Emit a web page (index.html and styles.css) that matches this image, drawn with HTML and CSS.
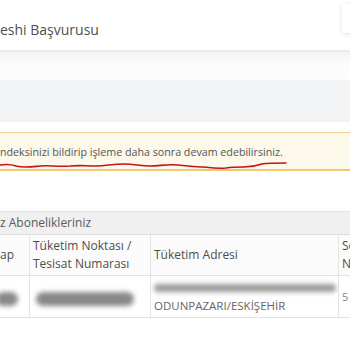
FILE: index.html
```html
<!DOCTYPE html>
<html lang="tr">

<head>
    <meta charset="UTF-8">
    <title>Başvuru</title>
    <link rel="stylesheet" href="styles.css">
</head>

<body>
    <header class="topbar">
        <h1 class="page-title">eshi Başvurusu</h1>
        <div class="user-card"></div>
    </header>
    <div class="subbar"></div>
    <div class="gray-band"></div>

    <main class="content">
        <div class="alert">
            <span class="alert-text">ndeksinizi bildirip işleme daha sonra devam edebilirsiniz.</span>
            <svg class="scribble" width="300" height="12" viewBox="0 0 300 12">
                <path d="M0 6 C6 5 10 5 16 7 C24 9 30 8 40 7 C50 6 56 8 70 7 C80 6 86 7 96 7 C106 7 112 5 124 5 C134 5 140 7 150 7 C160 7 166 5 178 6 C190 7 196 8 204 8 C212 9 218 10 226 9 C232 8 236 8 244 8 C252 8 256 7 262 5 C268 4 276 4 286 4"
                    fill="none" stroke="#c4121f" stroke-width="1.6" stroke-linecap="round" />
            </svg>
        </div>

        <section class="panel">
            <div class="panel-heading">z Abonelikleriniz</div>
            <table class="subs-table">
                <thead>
                    <tr>
                        <th class="col-a">ap</th>
                        <th class="col-b">Tüketim Noktası / Tesisat Numarası</th>
                        <th class="col-c">Tüketim Adresi</th>
                        <th class="col-d">Sözleşme Numarası</th>
                    </tr>
                </thead>
                <tbody>
                    <tr>
                        <td class="col-a"><span class="blur blur-a"></span></td>
                        <td class="col-b"><span class="blur blur-b"></span></td>
                        <td class="col-c">
                            <span class="blur blur-c"></span>
                            <div class="address">ODUNPAZARI/ESKİŞEHİR</div>
                        </td>
                        <td class="col-d"><span class="faint">5</span></td>
                    </tr>
                </tbody>
            </table>
        </section>
    </main>
</body>

</html>
```

FILE: styles.css
```css
body {
    margin: 0;
    padding: 0;
    font-family: "Open Sans", "Liberation Sans", sans-serif;
    background: #ffffff;
    color: #555555;
    width: 350px;
    height: 350px;
    overflow: hidden;
}

.topbar {
    height: 52px;
    background: #ffffff;
    display: flex;
    align-items: center;
    justify-content: space-between;
    border-bottom: 2px solid #ececec;
    box-sizing: border-box;
}

.page-title {
    margin: 0;
    font-size: 14px;
    font-weight: 400;
    color: #505050;
    padding-top: 8px;
}

.user-card {
    width: 14px;
    height: 29px;
    margin-top: -14px;
    background: #ffffff;
    box-shadow: 0 1px 5px rgba(0, 0, 0, 0.12);
    border-radius: 2px;
    margin-right: -6px;
}

.subbar {
    height: 28px;
    background: linear-gradient(#f3f3f3, #fcfcfc 40%, #fdfdfd);
}

.gray-band {
    height: 42px;
    background: #f3f4f6;
}

.content {
    padding-top: 10px;
}

.alert {
    position: relative;
    background: #fcf8ea;
    border-top: 1px solid #f2d48f;
    border-bottom: 2px solid #f0c870;
    height: 36px;
    display: flex;
    align-items: center;
}

.alert-text {
    font-size: 10.7px;
    color: #555555;
    margin-top: 2px;
}

.scribble {
    position: absolute;
    left: 0;
    top: 26px;
}

.panel {
    margin-top: 40px;
}

.panel-heading {
    height: 22px;
    line-height: 22px;
    background: #f0f0f0;
    border-top: 1px solid #e3e3e3;
    border-bottom: 1px solid #dddddd;
    font-size: 12px;
    color: #5a5a5a;
}

.subs-table {
    border-collapse: collapse;
    table-layout: fixed;
    width: 420px;
}

.subs-table th,
.subs-table td {
    border-left: 1px solid #e4e4e4;
    border-bottom: 1px solid #e2e2e2;
    text-align: left;
    vertical-align: middle;
    padding: 0 3px;
    font-size: 12px;
    font-weight: 500;
    color: #4e4e4e;
    line-height: 18px;
    overflow: hidden;
}

.subs-table th {
    height: 40px;
    background: #fbfbfb;
}

.subs-table td {
    height: 41px;
    font-weight: 400;
    background: #ffffff;
}

.subs-table .col-a {
    width: 26px;
    border-left: none;
    padding-left: 0;
}

.col-b {
    width: 114px;
}

.col-c {
    width: 181px;
}

.col-d {
    width: 76px;
    white-space: normal;
}

.blur {
    display: block;
    background: #888888;
    filter: blur(2.5px);
    border-radius: 8px;
}

.blur-a {
    width: 22px;
    height: 14px;
    margin-left: -4px;
    margin-top: 4px;
}

.blur-b {
    width: 98px;
    height: 14px;
    margin-left: 3px;
    margin-top: 4px;
}

.blur-c {
    width: 182px;
    height: 8px;
    margin-top: 4px;
    background: #999999;
}

.address {
    font-size: 11.5px;
    color: #666666;
    margin-top: 6px;
    line-height: 16px;
}

.faint {
    color: #888888;
    font-size: 11px;
}
```
